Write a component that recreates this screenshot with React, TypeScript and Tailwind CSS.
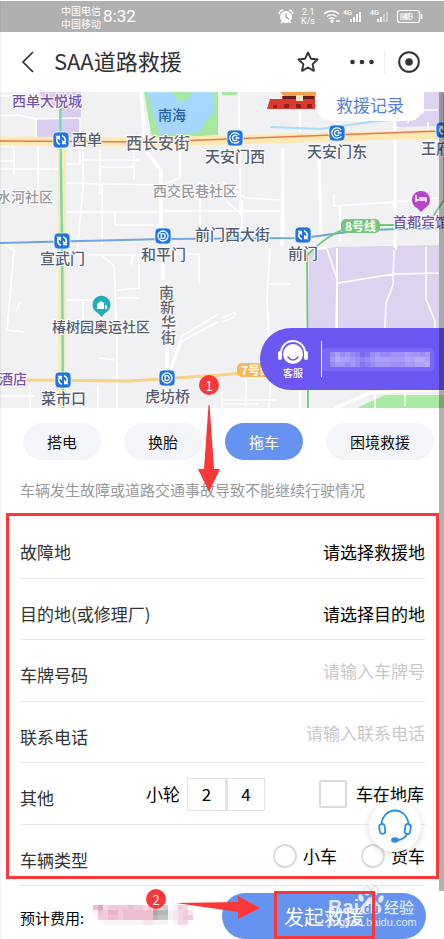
import type { ReactNode } from "react";

const LABEL = "#545c74";

function Metro({ x, y, kind }: { x: number; y: number; kind: "swap" | "d" | "c" }) {
  return (
    <g transform={`translate(${x} ${y})`}>
      <rect x="-8" y="-8" width="16" height="16" rx="4" fill="#1f74df" stroke="#fff" strokeWidth="0.7" />
      {kind === "swap" ? (
        <g>
          <path d="M-1 4.300A4.400 4.400 0 0 1-3.500-2.500M1-4.300A4.400 4.400 0 0 1 3.500 2.500" fill="none" stroke="#fff" strokeWidth="1.700" />
          <path d="M-5.700-4.200h4.700v4.600zM5.700 4.200H1V-.4z" fill="#fff" />
        </g>
      ) : kind === "d" ? (
        <g fill="none" stroke="#fff" strokeWidth="1.3">
          <circle r="5" />
          <path d="M-1.800-2.400h1.600a2.400 2.400 0 0 1 0 4.800h-1.600z" />
        </g>
      ) : (
        <g fill="none" stroke="#fff" strokeWidth="1.3">
          <path d="M4.200-3A5.200 5.200 0 1 0 4.200 3" />
          <path d="M4.500 0H.5M2.200-1.600A2.600 2.600 0 1 0 2.200 1.600" />
        </g>
      )}
    </g>
  );
}

function StreetMap() {
  return (
    <svg className="block h-[316px] w-full" viewBox="0 92 444 316" preserveAspectRatio="xMinYMin slice" role="img" aria-label="地图">
      <rect y="92" width="444" height="316" fill="#f1f1f3" />
      {/* districts, water and parks */}
      <path d="M39 92h42v46H37v-19h23v-13H46z" fill="#d9cdf0" />
      <path d="M144 92h74v43l-66 4z" fill="#a7e8a0" />
      <path d="M147 92h67l-1 22-7 5-5 13-41 3-8-24z" fill="#a6d8ff" />
      <path d="M172 92h20l-5 8-8 2zM222 92h15v3h-15z" fill="#a7e8a0" />
      <path d="M392 116l32-2v-22h20v34l-50 1z" fill="#ddd2ef" />
      <path d="M309 252l27-5 103-2v87H308z" fill="#ddd2f0" />
      <path d="M357 408l28-13h59v13z" fill="#a9eaa2" />
      {/* side streets */}
      <g fill="none" stroke="#fff" strokeWidth="1.6">
        <path d="M0 116l18-1 18 4v25M14 144v17M0 161h14M0 146h14M36 119l45-1M38 144v25H0M0 169h60M80 119v45H63M38 168v22M14 155v20M83 144v42l-6 68M100 150v44M84 160h55M100 167h34M134 150v30M60 183l100 2M66 212h94M102 184v60M115 213v12h45M60 255h100M100 254l14 12 3 70v72M139 258v30l-22 2M117 298h22M4 244l10 6-7 80 17 2M20 302l-4 10M66 300h30M83 302v20M114 360l-15-2M133 255l-2 10M165 254h34v30M0 96h14M180 148v30l-16 6M240 148v65l-14-12M200 182v60M165 211h118M223 182l22 16 39 2M242 200v42M282 148l2 86M318 150l3 95M334 194v12l60-4 44-4M340 206v36M394 120l2 130M408 95v28M415 94v26M400 110h38M428 122v30l10 4M300 94v38M239 94v36M222 380v28M300 390v18M246 380v28M222 400h55M98 385v23M30 385v23M0 396h35M270 248l-3 50 4 80-2 30M270 284h20M338 283l56-9 45-1M327 249l10 30-1 50M394 250l-1 35-7 18-1 25M426 247v52l9 22v10M218 322l-36 19-13 35M218 314l-36 22-14 38" />
        <path d="M222 318c12-6 16-7 12-1l-12 5M222 404h37M375 392v16M405 392v14" />
      </g>
      <g fill="none" stroke="#fff" strokeWidth="3.6">
        <path d="M141 92l5 58 15 21v70M163 250v30M167 338v38" />
        <path d="M283 148l-1 98M319 150l2 86M395 118v130" strokeWidth="3" />
        <path d="M337 248v82M309 249l17-1" strokeWidth="2" />
        <path d="M335 408l35-15 74-4" strokeWidth="3" />
      </g>
      {/* arterial roads */}
      <path d="M0 141l150 1 290-8" fill="none" stroke="#ffe9b0" strokeWidth="9" />
      <path d="M0 141l150 1 290-11" fill="none" stroke="#e07a5c" strokeWidth="1.6" />
      <path d="M62 150v258" stroke="#fbeab8" strokeWidth="8" fill="none" />
      <path d="M60 94l2 150 1 164" fill="none" stroke="#6fdcab" strokeWidth="2.4" />
      <path d="M0 243l163-4 140-1 60-8 81-2" fill="none" stroke="#6fa6dd" strokeWidth="1.8" />
      <path d="M270 127l50 2 50-7 40-4" fill="none" stroke="#a8dcf8" strokeWidth="2" />
      <path d="M20 380l110 1 90-6 45-4" fill="none" stroke="#f7d383" strokeWidth="3" />
      <path d="M444 94v106l-12 18-34 7h-38c-24 4-38 16-53 30l1 153" fill="none" stroke="#6fca77" strokeWidth="1.8" />
      {/* gate tower */}
      <path d="M267 109l3-10h12v-3h33v13z" fill="#d93a30" />
      <path d="M280 92h38l-3 4h-31z" fill="#f3a04c" />
      <path d="M283 96h31v3h-31z" fill="#602019" />
      <path d="M273 108v-3h4v3M284 108v-4h5v4M296 108v-4h5v4M307 108v-4h5v4" fill="#8e201c" />
      <path d="M296 95h7v6h-7z" fill="#f5e2c2" />
      {/* route badges */}
      <rect x="341" y="219" width="39" height="14" rx="5" fill="#72c879" />
      <rect x="237" y="363" width="36" height="14" rx="5" fill="#f5b75b" />
      <Metro x={61} y={140} kind="swap" />
      <Metro x={62} y={241} kind="swap" />
      <Metro x={163} y={236} kind="d" />
      <Metro x={235} y={138} kind="c" />
      <Metro x={337} y={133} kind="c" />
      <Metro x={303} y={235} kind="swap" />
      <Metro x={444} y={130} kind="swap" />
      <Metro x={63} y={380} kind="swap" />
      <Metro x={167} y={378} kind="d" />
      {/* place pins */}
      <path d="M101.500 317l-3.500-4a9 9 0 1 1 7 0z" fill="#20aebc" />
      <path d="M97 309v-5l4-3 3 2v6zM105 309v-4h2v4z" fill="#fff" />
      <path d="M421 212l-4-4a9 9 0 1 1 8 0z" fill="#b547c7" />
      <path d="M416 195v7M416 200h10M426 202v-4h-7" fill="none" stroke="#fff" strokeWidth="1.4" />
      <g className="font-medium" fill={LABEL} stroke="#fff" strokeWidth="2" paintOrder="stroke" strokeLinejoin="round" fontSize="15">
        <g fill="#7651ad" fontSize="14">
          <text x="12" y="106">西单大悦城</text>
          <text x="393" y="227">首都宾馆</text>
          <text x="-1" y="384">酒店</text>
        </g>
        <text x="158" y="120" fontSize="14" fill="#2d609d" stroke="none">南海</text>
        <text x="72" y="145">西单</text>
        <text x="126" y="149" fontSize="16" fill="#65656b">西长安街</text>
        <text x="205" y="162">天安门西</text>
        <text x="307" y="157">天安门东</text>
        <text x="421" y="154">王府井</text>
        <g fill="#98989d" fontSize="14">
          <text x="-3" y="202">水河社区</text>
          <text x="153" y="196">西交民巷社区</text>
        </g>
        <text x="40" y="264">宣武门</text>
        <text x="141" y="260">和平门</text>
        <text x="195" y="240">前门西大街</text>
        <text x="288" y="259">前门</text>
        <text x="52" y="332" fontSize="14">椿树园奥运社区</text>
        <text x="41" y="404">菜市口</text>
        <text x="145" y="402">虎坊桥</text>
        <g fill="#65656b" fontSize="15">
          <text x="159" y="298">南</text>
          <text x="160" y="313">新</text>
          <text x="161" y="328">华</text>
          <text x="161" y="343">街</text>
        </g>
        <g fill="#fff" stroke="none" fontSize="12" className="font-bold">
          <text x="345" y="231">8号线</text>
          <text x="241" y="375">7号线</text>
        </g>
      </g>
    </svg>
  );
}

/** Pixel mosaic that masks private data: each digit is a tone from 0 (clear) to 9 (solid). */
function Mosaic({ rows, colors, size }: { rows: string[]; colors: string[]; size: number }) {
  return (
    <svg className="block" width={rows[0].length * size} height={rows.length * size} aria-hidden="true">
      {rows.flatMap((row, y) =>
        [...row].map((tone, x) => (
          <rect
            key={`${x}-${y}`}
            x={x * size}
            y={y * size}
            width={size}
            height={size}
            fill={colors[x > row.length * 0.58 && x < row.length * 0.76 ? 1 : 0]}
            opacity={Number(tone) / 10}
          />
        )),
      )}
    </svg>
  );
}

function StatusBar() {
  return (
    <div className="mt-px flex h-[31px] items-center bg-[#b0b0b0] pl-[61px] text-white">
      <div className="text-[10px] leading-[13px]">
        <div>中国电信</div>
        <div>中国移动</div>
      </div>
      <span className="ml-[2px] font-['Roboto','Noto_Sans_CJK_SC',sans-serif] text-[17px] leading-none">8:32</span>
      <svg className="mr-[20px] ml-auto block" width="146" height="24" viewBox="278 4 146 24" fill="none" stroke="#fff">
        <circle cx="286" cy="16" r="5.500" fill="#fff" />
        <path d="M279 13a5 5 0 0 1 4-4M293 13a5 5 0 0 0-4-4M281 22l2-2M291 22l-2-2" strokeWidth="1.600" />
        <path d="M286 12.500V16l3 2" stroke="#999" strokeWidth="1.200" />
        <g fill="#fff" stroke="none" className="font-['Roboto','Noto_Sans_CJK_SC',sans-serif]">
          <text x="302" y="14" fontSize="9">2.1</text>
          <text x="301" y="23" fontSize="9">K/s</text>
          <text x="343" y="14" fontSize="7" fontWeight="500">4G</text>
          <text x="370" y="14" fontSize="7" fontWeight="500">4G</text>
          <path d="M350 18h2v3h-2zM353 16h2v5h-2zM356 13h2v8h-2zM359 11h2v10h-2zM377 18h2v3h-2zM380 16h2v5h-2z" />
          <path d="M383 13h2v8h-2zM386 11h2v10h-2z" opacity=".4" />
          <circle cx="332" cy="20" r="1.700" />
        </g>
        <path d="M324 13a11 11 0 0 1 15 0M327 15.500a7.500 7.500 0 0 1 9.500 0M329 18a4 4 0 0 1 5.500 0" strokeWidth="1.500" />
        <path d="M336 20h4" strokeWidth="1.300" />
        <rect x="397.500" y="9.500" width="22" height="12" rx="2.500" strokeWidth="1.200" />
        <path d="M421.500 13v5" strokeWidth="1.600" />
        <rect x="400" y="12" width="10" height="7" fill="#fff" opacity=".5" stroke="none" />
        <text x="403" y="19" fontSize="9" fill="#fff" stroke="none">49</text>
      </svg>
    </div>
  );
}

function TitleBar() {
  return (
    <header className="flex h-[60px] items-center bg-white text-[#303030]">
      <button aria-label="返回" className="ml-[20px] p-0">
        <svg className="block" width="15" height="24" viewBox="0 0 15 24" fill="none" stroke="#333" strokeWidth="1.700">
          <path d="M13 2L3 12l10 10" />
        </svg>
      </button>
      <h1 className="ml-[19px] flex-1 pb-1 text-[22px] leading-8">SAA道路救援</h1>
      <button aria-label="收藏">
        <svg className="block" width="24" height="24" viewBox="0 0 24 24" fill="none" stroke="#333" strokeWidth="1.900" strokeLinejoin="round">
          <path d="M12 2.500l2.900 6.200 6.600.8-4.900 4.600 1.300 6.700L12 17.500l-5.900 3.300 1.300-6.700-4.900-4.600 6.600-.8z" />
        </svg>
      </button>
      <button aria-label="更多" className="ml-[30px]">
        <svg className="block" width="24" height="24" viewBox="0 0 24 24" fill="#333">
          <circle cx="2.500" cy="12" r="2.300" /><circle cx="12" cy="12" r="2.300" /><circle cx="21.500" cy="12" r="2.300" />
        </svg>
      </button>
      <span className="ml-[10px] h-6 w-px bg-[#eee]" />
      <button aria-label="关闭" className="mr-[23px] ml-[12px]">
        <svg className="block" width="24" height="24" viewBox="0 0 24 24">
          <circle cx="12" cy="12" r="9.800" fill="none" stroke="#333" strokeWidth="2" />
          <circle cx="12" cy="12" r="3.800" fill="#333" />
        </svg>
      </button>
    </header>
  );
}

function ServiceBar() {
  return (
    <a href="#service" className="absolute top-[236px] right-0 flex h-[62px] w-[184px] items-center rounded-l-full bg-[#6b58f2] text-white">
      <span className="ml-[17px] flex flex-col items-center">
        <svg className="block" width="32" height="28" viewBox="0 0 32 28">
          <path d="M4 14a12 12 0 0 1 24 0" fill="none" stroke="#fff" strokeWidth="2" />
          <rect x="1" y="12" width="4" height="9" rx="2" fill="#fff" />
          <rect x="27" y="12" width="4" height="9" rx="2" fill="#fff" />
          <circle cx="16" cy="15" r="10" fill="#fff" />
          <path d="M11 18c3 4 7 4 10 0" fill="none" stroke="#6b58f2" strokeWidth="1.500" strokeLinecap="round" />
        </svg>
        <span className="text-[10px] leading-3 font-medium">客服</span>
      </span>
      <span className="ml-[12px] h-9 w-px bg-white" />
      <span className="rounded-sm bg-white/10 py-1 pr-1 pl-2">
        <Mosaic
          size={5}
          colors={["#e0dcff", "#d8d0fb"]}
          rows={["35343201343344454434", "46554323455555565665", "34434312344444454556"]}
        />
      </span>
    </a>
  );
}

function Row({ label, htmlFor, children }: { label: string; htmlFor?: string; children: ReactNode }) {
  return (
    <div className="mr-[14px] ml-[20px] flex items-center border-b border-[#e6e6e6] pt-[9px] odd:h-[62px] even:h-[61px] last:border-[#f5f5f5]">
      {htmlFor ? (
        <label htmlFor={htmlFor} className="shrink-0 text-[#333]">{label}</label>
      ) : (
        <span className="shrink-0 text-[#333]">{label}</span>
      )}
      {children}
    </div>
  );
}

function Tab({ active, children }: { active?: boolean; children: ReactNode }) {
  return (
    <button
      aria-pressed={!!active}
      className={`h-[37px] shrink-0 rounded-full px-6 text-[15px] ${active ? "bg-[#6693f0] text-white" : "bg-[#f4f5f9] text-[#111]"}`}
    >
      {children}
    </button>
  );
}

function Frame({ className }: { className: string }) {
  return <div className={`pointer-events-none absolute border-[3px] border-[#fb3838] ${className}`} />;
}

function Step({ n, className }: { n: number; className: string }) {
  return (
    <span className={`absolute flex size-5 items-center justify-center rounded-full bg-[#fb3838] text-[13px] leading-none text-white ${className}`}>
      {n}
    </span>
  );
}

function Watermark() {
  return (
    <svg className="pointer-events-none absolute top-0 right-[22px] opacity-80" width="96" height="46" viewBox="326 885 96 46" fill="#fff">
      <g stroke="#9fa8ba" strokeWidth=".6">
        <ellipse cx="361" cy="897" rx="2.700" ry="4" transform="rotate(-20 361 897)" />
        <ellipse cx="367" cy="890" rx="3.300" ry="4.500" />
        <ellipse cx="375" cy="890" rx="3.300" ry="4.500" />
        <ellipse cx="381" cy="898" rx="2.700" ry="4" transform="rotate(20 381 898)" />
        <path d="M371 896c4 0 5 5 9 8 4 5 0 10-5 9-3-1-5-1-8 0-5 1-9-4-5-9 4-3 5-8 9-8z" />
      </g>
      <text x="328" y="913" fontSize="20" fontWeight="700" className="font-['Liberation_Sans',sans-serif]">Bai</text>
      <text x="364" y="912" fontSize="12" fontWeight="700" fill="#6693f0" className="font-['Liberation_Sans',sans-serif]">du</text>
      <text x="384" y="912" fontSize="15" fontWeight="500">经验</text>
      <text x="328" y="925" fontSize="11" className="font-['Liberation_Sans',sans-serif]">jingyan.baidu.com</text>
    </svg>
  );
}

const RADIO = "size-6 appearance-none rounded-full border-2 border-[#dadada] bg-white checked:border-[#6693f0] checked:bg-[#6693f0]";

export default function App() {
  return (
    <main className="relative overflow-hidden bg-white font-['Noto_Sans_CJK_SC','Noto_Sans',sans-serif] text-[17px] leading-6 text-black">
      <StatusBar />
      <TitleBar />

      <section className="relative overflow-hidden">
        <StreetMap />
        <button className="absolute top-0 right-[20px] h-[29px] w-[108px] rounded-b-2xl bg-white pb-1 text-[17px] leading-6 text-[#5a7ed8]">救援记录</button>
        <ServiceBar />
      </section>

      <nav className="flex gap-[23px] pt-[15px] pl-[23px]">
        <Tab>搭电</Tab>
        <Tab>换胎</Tab>
        <Tab active>拖车</Tab>
        <Tab>困境救援</Tab>
      </nav>
      <p className="mt-[18px] ml-[20px] text-[15px] whitespace-nowrap text-[#999]">车辆发生故障或道路交通事故导致不能继续行驶情况</p>

      <form className="relative mt-[15px] pr-[5px]" onSubmit={(e) => e.preventDefault()}>
        <Row label="故障地">
          <button type="button" className="ml-auto">请选择救援地</button>
        </Row>
        <Row label="目的地(或修理厂)">
          <button type="button" className="ml-auto">请选择目的地</button>
        </Row>
        <Row label="车牌号码" htmlFor="plate">
          <input id="plate" placeholder="请输入车牌号" className="min-w-0 flex-1 pb-2 text-right outline-none placeholder:text-[#c9c9c9]" />
        </Row>
        <Row label="联系电话" htmlFor="phone">
          <input id="phone" type="tel" placeholder="请输入联系电话" className="min-w-0 flex-1 pb-2 text-right outline-none placeholder:text-[#c9c9c9]" />
        </Row>
        <Row label="其他">
          <div className="mr-px ml-auto flex items-center pb-2">
            <span className="mr-[7px]">小轮</span>
            <button type="button" className="h-[33px] w-[39px] border border-[#e3e3e3]">2</button>
            <button type="button" className="h-[33px] w-[39px] border border-l-2 border-[#e3e3e3]">4</button>
            <input id="garage" type="checkbox" className="ml-[54px] size-[28px] appearance-none rounded-xs border-2 border-[#dadada] bg-white checked:bg-[#6693f0]" />
            <label htmlFor="garage" className="ml-[9px]">车在地库</label>
          </div>
        </Row>
        <Row label="车辆类型">
          <div className="ml-auto flex items-center pb-2">
            <input id="car" name="kind" type="radio" className={RADIO} />
            <label htmlFor="car" className="ml-[6px]">小车</label>
            <input id="truck" name="kind" type="radio" className={`ml-[24px] ${RADIO}`} />
            <label htmlFor="truck" className="ml-[6px]">货车</label>
          </div>
        </Row>
        <button type="button" aria-label="在线客服" className="absolute right-[23px] bottom-[34px] flex size-[52px] items-center justify-center rounded-full bg-white shadow-[0_2px_8px_rgba(0,0,0,0.14)]">
          <svg width="36" height="36" viewBox="0 0 36 36" fill="none" stroke="#2790dd" strokeWidth="1.800">
            <path d="M4.500 17a13.500 14.500 0 0 1 27 0" />
            <rect x="2.500" y="16" width="5.500" height="10" rx="2.700" transform="rotate(-8 5 21)" />
            <rect x="28" y="16" width="5.500" height="10" rx="2.700" transform="rotate(8 31 21)" />
            <path d="M30 26c-2 4-6 6-10 6" />
            <ellipse cx="18" cy="32" rx="3" ry="1.800" fill="#2790dd" />
          </svg>
        </button>
        <Frame className="-top-[4px] right-[5px] bottom-[7px] left-[6px]" />
      </form>

      <footer className="relative flex h-[53px] items-start">
        <span className="mt-[20px] ml-[20px] shrink-0 text-[15px]">预计费用:</span>
        <span className="mt-[19px] ml-[9px]">
          <Mosaic
            size={5}
            colors={["#db7da5", "#858585"]}
            rows={["57344445443453401430", "15466455555576612342", "04455455555565512344", "00111111112211101330"]}
          />
        </span>
        <button className="mt-[7px] mr-[18px] ml-auto h-[46px] w-[204px] rounded-full bg-[#6693f0] pt-px text-[20px] text-white">发起救援</button>
        <Watermark />
        <Frame className="top-[5px] right-[69px] bottom-0 w-[101px]" />
        <Step n={2} className="top-[3px] left-[146px]" />
        <svg className="pointer-events-none absolute top-[10px] left-[176px]" width="85" height="24" viewBox="0 0 85 24" fill="#fb3838">
          <path d="M0 7L62 6V0l22 12-22 11v-7z" />
        </svg>
      </footer>

      <div className="absolute inset-y-0 left-0 w-px bg-black/5" />
      <div className="absolute top-[92px] right-0 h-[799px] w-[5px] bg-black/30" />
      <Step n={1} className="top-[375px] left-[199px]" />
      <svg className="pointer-events-none absolute top-[405px] left-[198px]" width="22" height="87" viewBox="0 0 22 87" fill="#fb3838">
        <path d="M10.500 0h1L16 64h6L11 87 0 64h6z" />
      </svg>
    </main>
  );
}
